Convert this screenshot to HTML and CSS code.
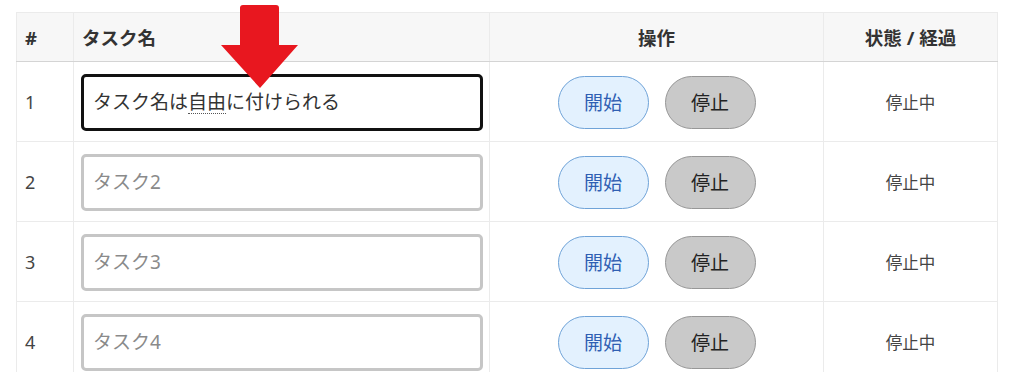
FILE: index.html
```html
<!DOCTYPE html>
<html lang="ja">
<head>
    <meta charset="UTF-8">
    <meta name="viewport" content="width=device-width, initial-scale=1.0">
    <title>タスク一覧</title>
    <link rel="stylesheet" href="styles.css">
</head>
<body>

    <div class="wrap">
        <!-- 注目用の矢印 -->
        <svg class="arrow" width="78" height="84" viewBox="0 0 78 84">
            <path d="M22 0 H55 Q58 0 58 3 V40 H77 L39 83 L0 40 H19 V3 Q19 0 22 0 Z" fill="#e8171f"/>
        </svg>

        <table class="tasks">
            <colgroup>
                <col class="w-no">
                <col class="w-name">
                <col class="w-ops">
                <col class="w-state">
            </colgroup>
            <thead>
                <tr>
                    <th class="col-no">#</th>
                    <th class="col-name">タスク名</th>
                    <th class="col-ops">操作</th>
                    <th class="col-state">状態 / 経過</th>
                </tr>
            </thead>
            <tbody>
                <tr>
                    <td class="col-no">1</td>
                    <td class="col-name"><div class="task-input focused">タスク名は<span class="ime">自由</span>に付けられる</div></td>
                    <td class="col-ops"><button class="btn start">開始</button><button class="btn stop">停止</button></td>
                    <td class="col-state">停止中</td>
                </tr>
                <tr>
                    <td class="col-no">2</td>
                    <td class="col-name"><input class="task-input" placeholder="タスク2"></td>
                    <td class="col-ops"><button class="btn start">開始</button><button class="btn stop">停止</button></td>
                    <td class="col-state">停止中</td>
                </tr>
                <tr>
                    <td class="col-no">3</td>
                    <td class="col-name"><input class="task-input" placeholder="タスク3"></td>
                    <td class="col-ops"><button class="btn start">開始</button><button class="btn stop">停止</button></td>
                    <td class="col-state">停止中</td>
                </tr>
                <tr>
                    <td class="col-no">4</td>
                    <td class="col-name"><input class="task-input" placeholder="タスク4"></td>
                    <td class="col-ops"><button class="btn start">開始</button><button class="btn stop">停止</button></td>
                    <td class="col-state">停止中</td>
                </tr>
            </tbody>
        </table>
    </div>

</body>
</html>
```

FILE: styles.css
```css
/* ページ全体 */
body {
    margin: 0;
    background: #fff;
    color: #333;
    font-family: "Noto Sans", "Noto Sans CJK JP", sans-serif;
    overflow: hidden;
}

.wrap {
    position: relative;
    padding: 12px 16px 0 16px;
}

/* 矢印 */
.arrow {
    position: absolute;
    left: 221px;
    top: 5px;
}

/* テーブル */
.tasks {
    width: 981px;
    border-collapse: collapse;
    table-layout: fixed;
}

.w-no { width: 57px; }
.w-name { width: 416px; }
.w-ops { width: 334px; }
.w-state { width: 174px; }

.tasks th,
.tasks td {
    border: 1px solid #ebebeb;
    padding: 0;
}

.tasks th {
    height: 48px;
    background: #f7f7f7;
    font-size: 18.5px;
    font-weight: bold;
    color: #333;
    border-bottom: 1px solid #d4d4d4;
}

.tasks td {
    height: 79px;
    font-size: 18px;
    color: #444;
}

.col-no {
    text-align: left;
    padding-left: 8px !important;
}

.col-name {
    text-align: left;
}

th.col-name {
    padding-left: 8px !important;
}

td.col-name {
    padding: 0 7px !important;
}

.col-ops {
    text-align: center;
}

.col-state {
    text-align: center;
}

td.col-state {
    font-size: 16.5px;
    color: #444;
}

/* 入力欄 */
.task-input {
    box-sizing: border-box;
    display: block;
    width: 402px;
    height: 57px;
    margin-top: 1px;
    padding: 0 9px;
    border: 3px solid #c6c6c6;
    border-radius: 5px;
    font-family: inherit;
    font-size: 19px;
    color: #333;
    background: #fff;
    outline: none;
}

.task-input::placeholder {
    color: #8a8a8a;
}

.task-input.focused {
    border-color: #111;
    line-height: 51px;
}

.ime {
    border-bottom: 1px dotted #555;
    line-height: 1.2;
    display: inline-block;
}

/* ボタン */
.btn {
    width: 91px;
    height: 53px;
    border-radius: 27px;
    font-family: inherit;
    font-size: 19px;
    cursor: pointer;
    margin: 1px 8px 0 8px;
    vertical-align: middle;
}

.btn.start {
    background: #e3f1fe;
    border: 1px solid #6fa3d8;
    color: #2f5fb3;
}

.btn.stop {
    background: #c9c9c9;
    border: 1px solid #979797;
    color: #222;
}
```
